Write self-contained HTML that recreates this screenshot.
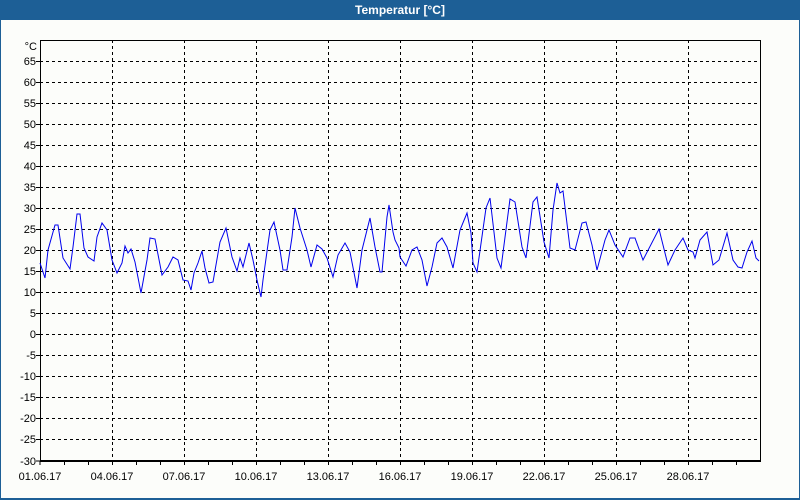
<!DOCTYPE html>
<html><head><meta charset="utf-8"><style>
html,body{margin:0;padding:0;width:800px;height:500px;overflow:hidden;background:#fcfdfa}
svg{display:block}
text{font-family:"Liberation Sans","DejaVu Sans",sans-serif;font-size:11px;fill:#000}
</style></head><body>
<svg width="800" height="500" xmlns="http://www.w3.org/2000/svg">
<rect x="0" y="0" width="800" height="500" fill="#1d5f96"/>
<rect x="1" y="20" width="798" height="478" fill="#fcfdfa"/>
<text x="400" y="14" text-anchor="middle" style="font-weight:bold;font-size:12px;fill:#fff">Temperatur [°C]</text>
<g stroke="#000" stroke-width="1" stroke-dasharray="3,3" shape-rendering="crispEdges">
<path d="M40 61.5H760M40 82.5H760M40 103.5H760M40 124.5H760M40 145.5H760M40 166.5H760M40 187.5H760M40 208.5H760M40 229.5H760M40 250.5H760M40 271.5H760M40 292.5H760M40 313.5H760M40 334.5H760M40 355.5H760M40 376.5H760M40 397.5H760M40 418.5H760M40 439.5H760"/>
<path d="M112.5 40V461M184.5 40V461M256.5 40V461M328.5 40V461M400.5 40V461M472.5 40V461M544.5 40V461M616.5 40V461M688.5 40V461"/>
</g>
<g stroke="#000" stroke-width="1" shape-rendering="crispEdges" fill="none">
<path d="M40.5 40.5H760.5V460.5H40.5Z"/>
<path d="M40 461.5H761" />
<path d="M40 461v4M64.5 461v4M88.5 461v4M112.5 461v4M136.5 461v4M160.5 461v4M184.5 461v4M208.5 461v4M232.5 461v4M256.5 461v4M280.5 461v4M304.5 461v4M328.5 461v4M352.5 461v4M376.5 461v4M400.5 461v4M424.5 461v4M448.5 461v4M472.5 461v4M496.5 461v4M520.5 461v4M544.5 461v4M568.5 461v4M592.5 461v4M616.5 461v4M640.5 461v4M664.5 461v4M688.5 461v4M712.5 461v4M736.5 461v4"/>
<path d="M36 61.5h4M36 82.5h4M36 103.5h4M36 124.5h4M36 145.5h4M36 166.5h4M36 187.5h4M36 208.5h4M36 229.5h4M36 250.5h4M36 271.5h4M36 292.5h4M36 313.5h4M36 334.5h4M36 355.5h4M36 376.5h4M36 397.5h4M36 418.5h4M36 439.5h4M36 461h4"/>
</g>
<g text-anchor="end">
<text x="37" y="50">°C</text>
<text x="36" y="65">65</text><text x="36" y="86">60</text><text x="36" y="107">55</text><text x="36" y="128">50</text><text x="36" y="149">45</text><text x="36" y="170">40</text><text x="36" y="191">35</text><text x="36" y="212">30</text><text x="36" y="233">25</text><text x="36" y="254">20</text><text x="36" y="275">15</text><text x="36" y="296">10</text><text x="36" y="317">5</text><text x="36" y="338">0</text><text x="36" y="359">-5</text><text x="36" y="380">-10</text><text x="36" y="401">-15</text><text x="36" y="422">-20</text><text x="36" y="443">-25</text><text x="36" y="465">-30</text>
</g>
<g text-anchor="middle">
<text x="40" y="480">01.06.17</text><text x="112" y="480">04.06.17</text><text x="184" y="480">07.06.17</text><text x="256" y="480">10.06.17</text><text x="328" y="480">13.06.17</text><text x="400" y="480">16.06.17</text><text x="472" y="480">19.06.17</text><text x="544" y="480">22.06.17</text><text x="616" y="480">25.06.17</text><text x="688" y="480">28.06.17</text>
</g>
<polyline fill="none" stroke="#0000ee" stroke-width="1" points="40,263 45,278 48,250 55,225 58,225 63,258 70,269 73,247 77,214 80,214 84,248 88,257 94,261 97,237 102,223 107,230 112,260 117,273 122,263 125,246 128,253 131,249 135,262 141,293 147,260 150,238 155,239 162,275 168,267 173,257 178,260 183,280 188,281 191,290 194,273 198,263 202,251 205,268 209,283 213,282 220,242 226,228 232,257 237,271 240,258 243,267 249,243 253,260 257,280 261,297 263,280 270,230 274,222 280,250 283,270 287,270 292,237 295,208 300,228 307,250 311,267 317,245 322,249 327,258 333,277 338,255 345,243 350,252 357,288 362,250 370,218 375,247 380,272 382,272 387,217 389,205 393,232 395,240 399,248 400,257 406,266 412,250 417,247 422,260 427,286 432,267 437,243 442,238 447,247 453,268 460,230 467,213 471,233 473,263 477,272 486,208 490,198 497,258 501,268 510,199 515,202 522,247 526,258 533,202 537,197 544,242 549,258 553,210 557,183 560,193 563,191 570,248 575,250 582,223 586,222 592,245 597,270 605,240 609,230 615,245 623,257 630,238 635,238 643,260 659,229 668,265 675,250 683,238 688,250 693,252 695,258 700,240 707,232 713,265 719,260 727,233 733,260 738,267 742,268 747,252 752,241 756,258 759,261"/>
</svg>
</body></html>
